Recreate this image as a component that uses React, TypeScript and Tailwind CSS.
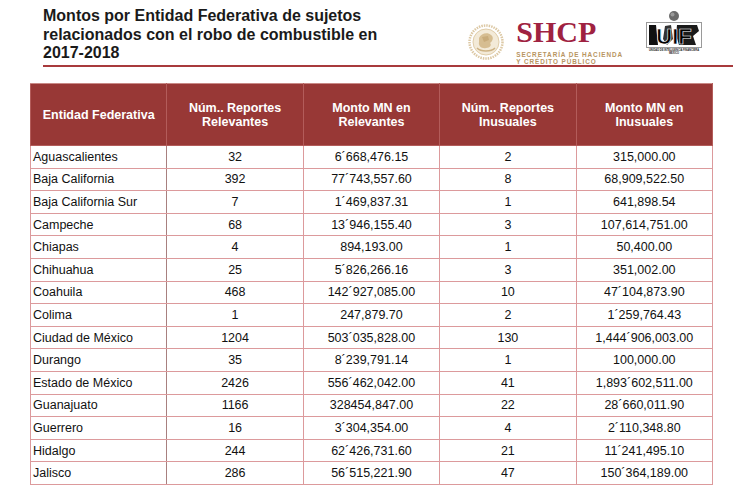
const rows: [string, string, string, string, string][] = [
  ["Aguascalientes", "32", "6´668,476.15", "2", "315,000.00"],
  ["Baja California", "392", "77´743,557.60", "8", "68,909,522.50"],
  ["Baja California Sur", "7", "1´469,837.31", "1", "641,898.54"],
  ["Campeche", "68", "13´946,155.40", "3", "107,614,751.00"],
  ["Chiapas", "4", "894,193.00", "1", "50,400.00"],
  ["Chihuahua", "25", "5´826,266.16", "3", "351,002.00"],
  ["Coahuila", "468", "142´927,085.00", "10", "47´104,873.90"],
  ["Colima", "1", "247,879.70", "2", "1´259,764.43"],
  ["Ciudad de México", "1204", "503´035,828.00", "130", "1,444´906,003.00"],
  ["Durango", "35", "8´239,791.14", "1", "100,000.00"],
  ["Estado de México", "2426", "556´462,042.00", "41", "1,893´602,511.00"],
  ["Guanajuato", "1166", "328454,847.00", "22", "28´660,011.90"],
  ["Guerrero", "16", "3´304,354.00", "4", "2´110,348.80"],
  ["Hidalgo", "244", "62´426,731.60", "21", "11´241,495.10"],
  ["Jalisco", "286", "56´515,221.90", "47", "150´364,189.00"],
];

const headers = [
  ["Entidad Federativa"],
  ["Núm.. Reportes", "Relevantes"],
  ["Monto MN en", "Relevantes"],
  ["Núm.. Reportes", "Inusuales"],
  ["Monto MN en", "Inusuales"],
];

const Seal = () => (
  <svg width="36" height="36" viewBox="0 0 36 36" className="shrink-0">
    <circle cx="18" cy="18" r="16.5" fill="none" stroke="#dcc8a4" strokeWidth="2.5" strokeDasharray="1.5 1" />
    <circle cx="18" cy="18" r="13" fill="#f3ead8" stroke="#e0cda9" strokeWidth="1" />
    <path d="M11 14 C13 9, 20 8, 23 11 C26 13, 25 17, 22 19 C24 21, 22 24, 18 24 C14 25, 10 22, 11 18 Z" fill="#d6bd91" />
    <path d="M9 24 C13 28, 23 28, 27 24" fill="none" stroke="#cdb283" strokeWidth="1.5" />
    <path d="M14 13 L20 12 L21 16 L16 18 Z" fill="#c8ab7a" />
  </svg>
);

const UifLogo = () => (
  <svg width="62" height="50" viewBox="0 0 62 50" className="shrink-0">
    <circle cx="31" cy="7" r="5" fill="#6b6b6b" />
    <circle cx="29.5" cy="5.5" r="2" fill="#9a9a9a" />
    <rect x="3.5" y="13.5" width="55" height="25" fill="#fff" stroke="#9a9a9a" strokeWidth="1" />
    <path d="M6 16 L13 16 L15 36 L6 36 Z" fill="#111" />
    <path d="M22 17 L28 16 L30 30 L24 36 L20 30 Z" fill="#333" />
    <path d="M34 16 L54 16 L56 22 L50 27 L53 36 L36 36 L33 26 Z" fill="#1a1a1a" />
    <text x="31" y="35" textAnchor="middle" fontFamily="Liberation Sans, Arial, sans-serif" fontWeight="900" fontSize="22" fill="#000" stroke="#fff" strokeWidth="0.6">
      UIF
    </text>
    <text x="31" y="42" textAnchor="middle" fontFamily="Liberation Sans, Arial, sans-serif" fontWeight="700" fontSize="2.6" fill="#222">
      UNIDAD DE INTELIGENCIA FINANCIERA
    </text>
    <text x="31" y="45" textAnchor="middle" fontFamily="Liberation Sans, Arial, sans-serif" fontWeight="700" fontSize="2.6" fill="#222">
      MÉXICO
    </text>
  </svg>
);

export default function App() {
  return (
    <div className="w-[750px] h-[500px] bg-white overflow-hidden font-['Liberation_Sans',Arial,sans-serif] text-[#111]">
      {/* header: title + logos */}
      <div className="ml-[43px] w-[690px] h-[67px] border-b-2 border-[#a83a3c] flex justify-between">
        <h1 className="pt-[7px] text-[16px] leading-[18.5px] font-bold text-[#1a1a1a] w-[340px]">
          Montos por Entidad Federativa de sujetos relacionados con el robo de combustible en 2017-2018
        </h1>
        <div className="flex items-start pt-[4px] pr-[28px]">
          <div className="flex items-center gap-[12px] mt-[15px]">
            <Seal />
            <div className="flex flex-col">
              <span className="font-['Liberation_Serif',serif] font-bold text-[30px] leading-[26px] text-[#9f2241]">
                SHCP
              </span>
              <span className="mt-[6px] text-[6.4px] leading-[7px] font-bold tracking-[0.14em] text-[#b8955f] whitespace-nowrap">
                SECRETARÍA DE HACIENDA
                <br />Y CRÉDITO PÚBLICO
              </span>
            </div>
          </div>
          <div className="ml-[20px] mt-[5px]">
            <UifLogo />
          </div>
        </div>
      </div>

      {/* table */}
      <table className="ml-[30px] mt-[16px] w-[683px] table-fixed border-collapse">
        <thead>
          <tr className="h-[62px] bg-[#983836]">
            {headers.map((h, i) => (
              <th
                key={i}
                className="border border-[#b35c5a] border-t-[#c98986] text-white font-bold text-[12.5px] leading-[14px] text-center align-middle"
              >
                {h.map((l, j) => (
                  <div key={j}>{l}</div>
                ))}
              </th>
            ))}
          </tr>
        </thead>
        <tbody>
          {rows.map((r) => (
            <tr key={r[0]} className="h-[22.6px]">
              <td className="border border-[#dc9a9c] border-r-[#a8807f] text-[12.5px] pl-[2px] leading-[14px] whitespace-nowrap">
                {r[0]}
              </td>
              {r.slice(1).map((c, i) => (
                <td key={i} className="border border-[#dc9a9c] text-[12.5px] leading-[14px] text-center">
                  {c}
                </td>
              ))}
            </tr>
          ))}
        </tbody>
      </table>
    </div>
  );
}
